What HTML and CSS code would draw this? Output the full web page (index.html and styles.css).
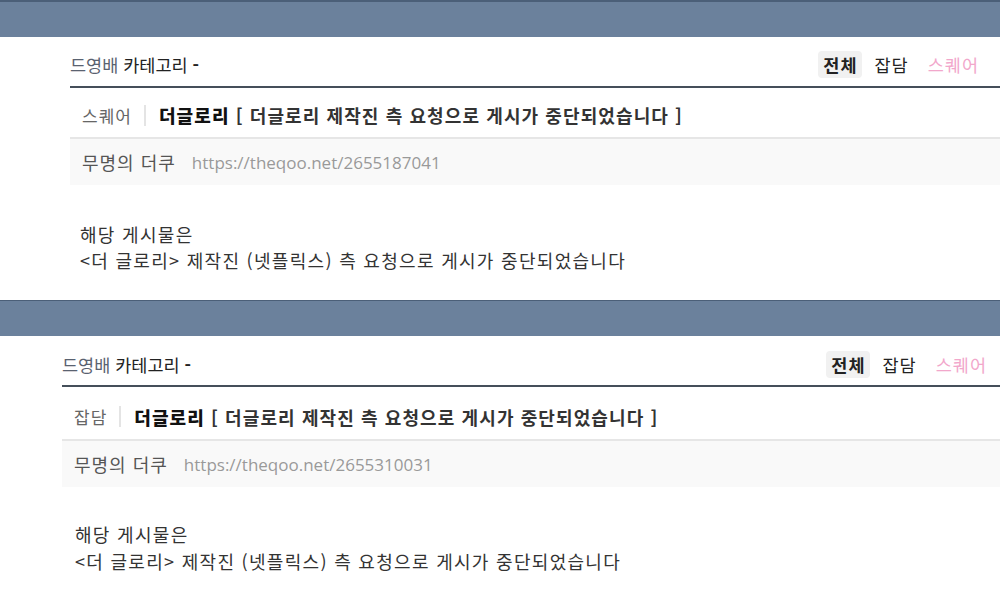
FILE: index.html
```html
<!DOCTYPE html>
<html lang="ko">
<head>
    <meta charset="UTF-8">
    <title>드영배 카테고리</title>
    <link rel="stylesheet" href="styles.css">
</head>
<body>
    <div class="post post-first">
        <div class="topbar"></div>
        <div class="board">
            <div class="board-head">
                <div class="board-name"><span class="cat">드영배</span> 카테고리 <b>-</b></div>
                <div class="tabs">
                    <span class="tab active">전체</span>
                    <span class="tab">잡담</span>
                    <span class="tab pink">스퀘어</span>
                </div>
            </div>
            <div class="title-row">
                <span class="category">스퀘어</span>
                <span class="title"><b>더글로리</b> [ 더글로리 제작진 측 요청으로 게시가 중단되었습니다 ]</span>
            </div>
            <div class="meta-row">
                <span class="writer">무명의 더쿠</span>
                <span class="url">https://theqoo.net/2655187041</span>
            </div>
            <div class="content">
                해당 게시물은<br>
                &lt;더 글로리&gt; 제작진 (넷플릭스) 측 요청으로 게시가 중단되었습니다
            </div>
        </div>
    </div>

    <div class="post post-second">
        <div class="topbar"></div>
        <div class="board">
            <div class="board-head">
                <div class="board-name"><span class="cat">드영배</span> 카테고리 <b>-</b></div>
                <div class="tabs">
                    <span class="tab active">전체</span>
                    <span class="tab">잡담</span>
                    <span class="tab pink">스퀘어</span>
                </div>
            </div>
            <div class="title-row">
                <span class="category">잡담</span>
                <span class="title"><b>더글로리</b> [ 더글로리 제작진 측 요청으로 게시가 중단되었습니다 ]</span>
            </div>
            <div class="meta-row">
                <span class="writer">무명의 더쿠</span>
                <span class="url">https://theqoo.net/2655310031</span>
            </div>
            <div class="content">
                해당 게시물은<br>
                &lt;더 글로리&gt; 제작진 (넷플릭스) 측 요청으로 게시가 중단되었습니다
            </div>
        </div>
    </div>
</body>
</html>
```

FILE: styles.css
```css
body {
    margin: 0;
    font-family: "Noto Sans CJK KR", "Noto Sans", sans-serif;
    color: #333;
    background: #fff;
    overflow: hidden;
}
.post {
    height: 300px;
}
.topbar {
    height: 35px;
    background-color: #6b819c;
    border-top: 2px solid #4b5f78;
}
.post-second .topbar {
    border-top: 1px solid #4b5f78;
}
.board {
    margin-left: 70px;
}
.post-second .board {
    margin-left: 62px;
}
.board-head {
    display: flex;
    justify-content: space-between;
    align-items: center;
    height: 43px;
    padding-top: 6px;
    border-bottom: 2px solid #454f5a;
    font-size: 17.5px;
}
.post-second .board-head {
    height: 41px;
    padding-top: 8px;
}
.board-name {
    color: #222;
}
.board-name .cat {
    color: #5a6270;
}
.tabs {
    display: flex;
    align-items: center;
    margin-right: 21px;
}
.post-second .tabs {
    margin-right: 13px;
}
.tab {
    color: #222;
    letter-spacing: 1px;
    margin-left: 12px;
}
.tab.active {
    margin-left: 0;
    padding: 1px 5px;
    border-radius: 4px;
    background: #f1f1f1;
    font-weight: bold;
}
.tab.pink {
    color: #f2a7cb;
    margin-left: 19px;
}
.title-row {
    display: flex;
    align-items: center;
    height: 44px;
    padding: 5px 0 0 12px;
    border-bottom: 2px solid #e6e6e6;
    font-size: 18px;
}
.post-second .title-row {
    height: 45px;
    padding-top: 7px;
}
.category {
    color: #666;
    font-size: 17px;
    letter-spacing: 1px;
    padding-right: 12px;
    margin-right: 13px;
    border-right: 2px solid #e4e4e4;
    line-height: 21px;
}
.title {
    color: #333;
    font-weight: bold;
    letter-spacing: 1.1px;
}
.title b {
    color: #111;
}
.meta-row {
    display: flex;
    align-items: center;
    height: 46px;
    padding-left: 12px;
    background: #f9f9f9;
    font-size: 18px;
}
.post-second .meta-row {
    height: 46px;
}
.writer {
    color: #555;
    letter-spacing: 1px;
    margin-right: 16px;
}
.url {
    font-family: "Open Sans", sans-serif;
    font-size: 17px;
    color: #999;
}
.content {
    padding: 36px 0 0 10px;
    font-size: 18px;
    letter-spacing: 1.3px;
    line-height: 26px;
    color: #333;
}
.post-second .content {
    padding: 34px 0 0 13px;
    line-height: 27px;
}
```
